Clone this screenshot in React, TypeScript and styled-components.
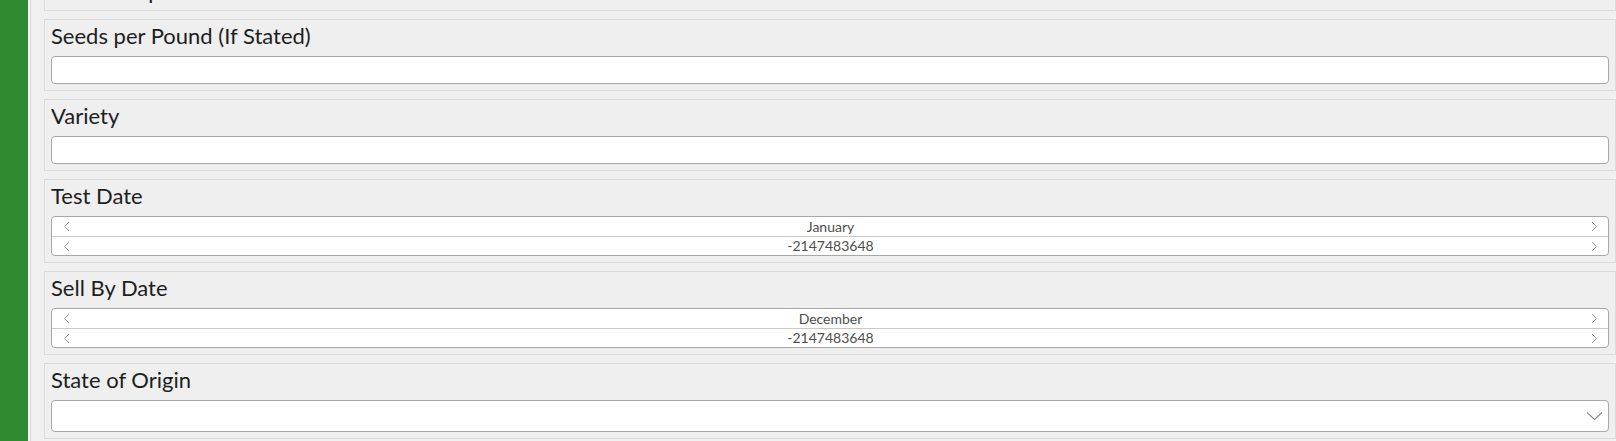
import React from 'react'
import styled, { createGlobalStyle } from 'styled-components'

const GlobalStyle = createGlobalStyle`
  html, body {
    margin: 0;
    padding: 0;
    overflow: hidden;
    background: #eff0ef;
    font-family: Lato, "Noto Sans", sans-serif;
  }
`

const ChevronLeft = () => (
  <svg width="7" height="11" viewBox="0 0 7 11">
    <polyline points="6,1 1.5,5.5 6,10" fill="none" stroke="#9a9a9a" strokeWidth="1" />
  </svg>
)

const ChevronRight = () => (
  <svg width="7" height="11" viewBox="0 0 7 11">
    <polyline points="1,1 5.5,5.5 1,10" fill="none" stroke="#9a9a9a" strokeWidth="1" />
  </svg>
)

const ChevronDown = () => (
  <svg width="17" height="10" viewBox="0 0 17 10">
    <polyline points="1,1.5 8.5,8.5 16,1.5" fill="none" stroke="#8a8a8a" strokeWidth="1.1" />
  </svg>
)

type DateProps = {
  month: string
  year: string
}

function DateSpinner(props: DateProps) {
  return (
    <SpinnerBox>
      <SpinnerRow>
        <ChevronLeft />
        <SpinnerValue>{props.month}</SpinnerValue>
        <ChevronRight />
      </SpinnerRow>
      <SpinnerRow divided>
        <ChevronLeft />
        <SpinnerValue>{props.year}</SpinnerValue>
        <ChevronRight />
      </SpinnerRow>
    </SpinnerBox>
  )
}

export default function App() {
  return (
    <Page>
      <GlobalStyle />
      <SideBar />
      <Gutter />
      <Content>
        <FieldList>
          <Card>
            <Label>Other Crop Seed</Label>
          </Card>
          <Card>
            <Label>Seeds per Pound (If Stated)</Label>
            <TextInput />
          </Card>
          <Card>
            <Label>Variety</Label>
            <TextInput />
          </Card>
          <Card>
            <Label>Test Date</Label>
            <DateSpinner month="January" year="-2147483648" />
          </Card>
          <Card>
            <Label>Sell By Date</Label>
            <DateSpinner month="December" year="-2147483648" />
          </Card>
          <Card>
            <Label>State of Origin</Label>
            <SelectBox>
              <ChevronDown />
            </SelectBox>
          </Card>
        </FieldList>
      </Content>
    </Page>
  )
}

const Page = styled.div`
  display: flex;
  height: 100vh;
  width: 100vw;
  overflow: hidden;
`

const SideBar = styled.div`
  width: 28px;
  flex-shrink: 0;
  background-color: #2f8a30;
`

const Gutter = styled.div`
  width: 2px;
  flex-shrink: 0;
  background-color: #f7f7f7;
  border-right: 1px solid #d8d8d8;
`

const Content = styled.div`
  flex: 1;
  min-width: 0;
  padding-left: 13px;
  overflow: hidden;
`

/* list is scrolled a little, so the first card is cut at the top */
const FieldList = styled.div`
  display: flex;
  flex-direction: column;
  gap: 8px;
  margin-top: -26px;
`

const Card = styled.div`
  display: flex;
  flex-direction: column;
  padding: 3px 6px 6px;
  border: 1px solid #dadbda;
  background-color: #eeefee;
`

const Label = styled.div`
  font-size: 22px;
  line-height: 26px;
  color: #1e1e1e;
  margin-bottom: 7px;

  &:last-child {
    margin-bottom: 0;
  }
`

const TextInput = styled.div`
  height: 28px;
  box-sizing: border-box;
  border: 1px solid #a8a8a8;
  border-radius: 4px;
  background-color: #ffffff;
`

const SelectBox = styled.div`
  height: 32px;
  box-sizing: border-box;
  border: 1px solid #a8a8a8;
  border-radius: 4px;
  background-color: #ffffff;
  display: flex;
  align-items: center;
  justify-content: flex-end;
  padding-right: 5px;
`

const SpinnerBox = styled.div`
  border: 1px solid #a8a8a8;
  border-radius: 4px;
  background-color: #ffffff;
  overflow: hidden;
`

const SpinnerRow = styled.div<{ divided?: boolean }>`
  height: ${(props) => (props.divided ? '18px' : '19px')};
  display: grid;
  grid-template-columns: 7px 1fr 7px;
  align-items: center;
  padding: 0 10px 0 11px;
  border-top: ${(props) => (props.divided ? '1px solid #c8c8c8' : 'none')};
`

const SpinnerValue = styled.span`
  text-align: center;
  font-size: 14px;
  line-height: 18px;
  color: #4e4e4e;
`
